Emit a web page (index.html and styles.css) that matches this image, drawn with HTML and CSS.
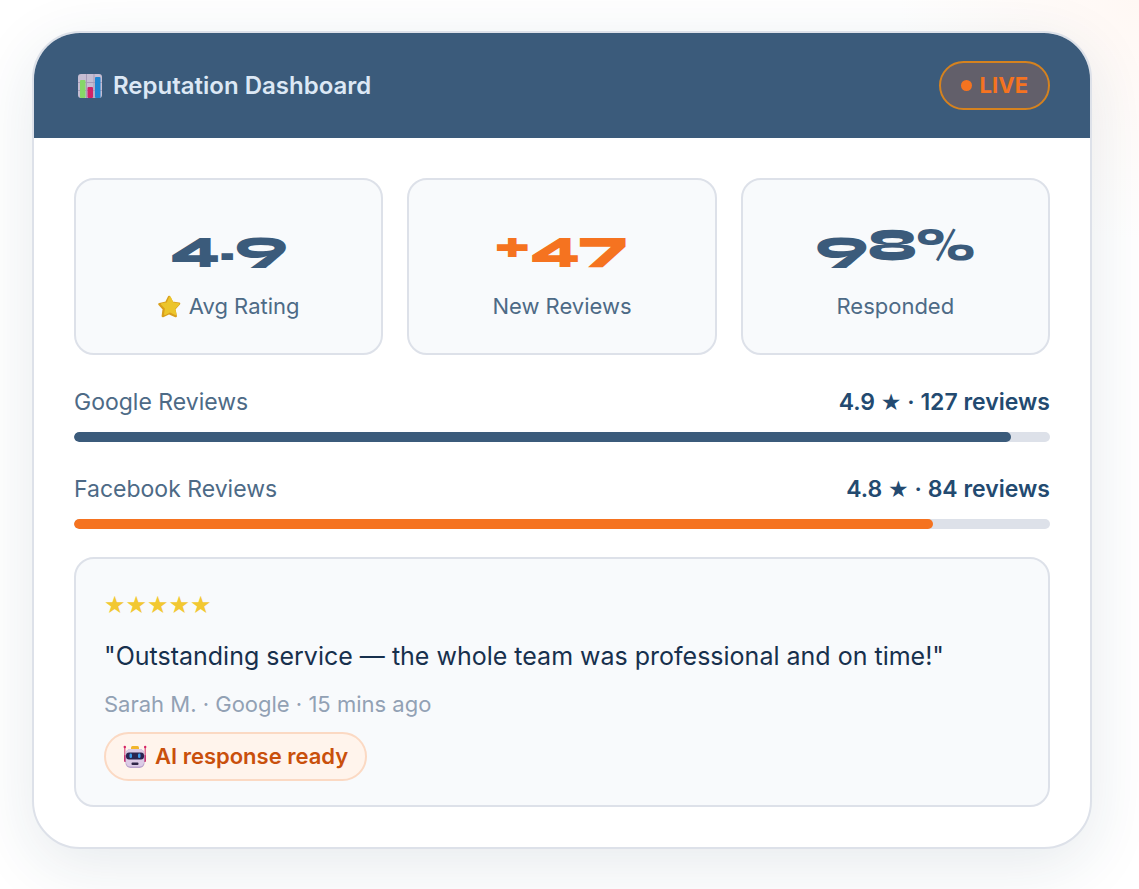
FILE: index.html
```html
<!DOCTYPE html>
<html lang="en">
<head>
  <meta charset="UTF-8">
  <meta name="viewport" content="width=device-width, initial-scale=1.0">
  <title>Reputation Dashboard</title>
  <link rel="stylesheet" href="styles.css">
</head>
<body>
  <main class="dashboard">
    <header class="dash-header">
      <h1 class="dash-title">
        <svg class="icon-chart" viewBox="0 0 24 24" aria-hidden="true">
          <rect width="24" height="24" rx="3" fill="#c6bdd2"/>
          <path d="M0 8.5h24M0 16.5h24M8.5 0v24M16 0v24" stroke="#a79bb8" stroke-width="1"/>
          <rect x="2" y="6" width="5.5" height="18" rx="1" fill="#86d767"/>
          <rect x="9.500" y="13" width="5.5" height="11" rx="1" fill="#cf2467"/>
          <rect x="17" y="3" width="5.5" height="21" rx="1" fill="#1f86d3"/>
        </svg>
        Reputation Dashboard
      </h1>
      <span class="live"><span class="live-dot"></span>LIVE</span>
    </header>
    <div class="dash-body">
      <section class="stats">
        <div class="stat">
          <div class="stat-value">4.9</div>
          <div class="stat-label">
            <svg class="icon-star" viewBox="0 0 24 24" aria-hidden="true">
              <path d="M11.500 2l3.300 6 7.200 1-5 5.500 1.500 7.500-7-3-6.500 3 1-7.500L1.500 9.500l7-1.500z" fill="#d99f1c" stroke="#d99f1c" stroke-width="2.500" stroke-linejoin="round"/>
              <path d="M12.500 2.500l2.800 6 6.200 1-4.500 4.500 1.200 6-5.700-2.800-5.200 2.800 1-6.200L4 9.500l6-1z" fill="#ecc52c" stroke="#ecc52c" stroke-width="2" stroke-linejoin="round"/>
            </svg>
            Avg Rating
          </div>
        </div>
        <div class="stat">
          <div class="stat-value orange">+47</div>
          <div class="stat-label">New Reviews</div>
        </div>
        <div class="stat">
          <div class="stat-value">98%</div>
          <div class="stat-label">Responded</div>
        </div>
      </section>

      <section class="source">
        <div class="source-row">
          <span>Google Reviews</span>
          <strong>4.9 <span class="star">★</span> · 127 reviews</strong>
        </div>
        <div class="bar"><div class="bar-fill" style="width:96%"></div></div>
      </section>
      <section class="source">
        <div class="source-row">
          <span>Facebook Reviews</span>
          <strong>4.8 <span class="star">★</span> · 84 reviews</strong>
        </div>
        <div class="bar"><div class="bar-fill orange" style="width:88%"></div></div>
      </section>

      <article class="review">
        <div class="review-stars star">★★★★★</div>
        <p class="review-text">"Outstanding service — the whole team was professional and on time!"</p>
        <p class="review-meta">Sarah M. · Google · 15 mins ago</p>
        <span class="ai-pill">
          <svg class="icon-robot" viewBox="0 0 24 24" aria-hidden="true">
            <path d="M1.800 2v14M22.200 2v14" stroke="#d8507f" stroke-width="1.200"/>
            <circle cx="1.800" cy="2" r="1.200" fill="#d52364"/>
            <circle cx="22.200" cy="2" r="1.200" fill="#d52364"/>
            <rect x="1" y="10" width="3" height="7" rx="1" fill="#c93572"/>
            <rect x="20" y="10" width="3" height="7" rx="1" fill="#c93572"/>
            <rect x="8" y="1" width="8" height="4" rx="1.500" fill="#f2b62c"/>
            <rect x="2.500" y="4" width="19" height="19" rx="5" fill="#b9a2cc"/>
            <rect x="3" y="4" width="18" height="17.500" rx="4.500" fill="#dccbe6"/>
            <rect x="3" y="7.500" width="18" height="7" rx="3" fill="#2a2450"/>
            <rect x="6.500" y="8.500" width="2.500" height="4.500" rx="1.200" fill="#3d9bea"/>
            <rect x="15" y="8.500" width="2.500" height="4.500" rx="1.200" fill="#3d9bea"/>
            <rect x="8.500" y="17.500" width="7" height="2.500" rx="1" fill="#2f2648"/>
          </svg>
          AI response ready
        </span>
      </article>
    </div>
  </main>
</body>
</html>
```
FILE: styles.css
```css
:root {
  --navy: #3b5b7b;
  --navy-dark: #234a70;
  --orange: #f57320;
  --line: #dde1e9;
  --soft: #f8fafc;
}
*, *::before, *::after { box-sizing: border-box; }
body {
  margin: 0;
  padding: 31px 47px 40px 32px;
  font-family: Inter, 'Liberation Sans', sans-serif;
  font-size: 23px;
  line-height: 37px;
  color: var(--navy);
  background: radial-gradient(circle at top right, #fff8f4, #fff 240px);
}
h1, p { margin: 0; }

.dashboard {
  border: 2px solid var(--line);
  border-radius: 48px;
  background: #fff;
  overflow: hidden;
  box-shadow: 0 16px 64px rgba(30,60,90,0.11);
}
.dash-header {
  display: flex;
  justify-content: space-between;
  align-items: center;
  padding: 28px 40px;
  background: var(--navy);
}
.dash-title {
  display: flex;
  align-items: center;
  gap: 11px;
  padding-left: 4px;
  font-size: 24px;
  font-weight: 600;
  color: #dce8f5;
}
.icon-chart { width: 24px; height: 24px; }
.live {
  display: flex;
  align-items: center;
  gap: 8px;
  padding: 4px 20px;
  border: 2px solid #d5821f;
  border-radius: 25px;
  background: #625f6a;
  color: var(--orange);
  font-size: 22px;
  font-weight: 700;
}
.live-dot { width: 11px; height: 11px; border-radius: 50%; background: var(--orange); }

.dash-body { padding: 40px; }
.stats { display: grid; grid-template-columns: repeat(3, 1fr); gap: 24px; }
.stat {
  padding: 28px;
  border: 2px solid var(--line);
  border-radius: 20px;
  background: var(--soft);
  text-align: center;
}
.stat-value {
  margin-bottom: 6px;
  font-family: Syne, 'DejaVu Sans', sans-serif;
  font-size: 45px;
  font-weight: 800;
  line-height: 74px;
}
.stat-value.orange { color: var(--orange); }
.stat-label {
  display: flex;
  justify-content: center;
  align-items: center;
  gap: 8px;
  font-size: 22px;
  color: #4d6a86;
}
.icon-star { width: 23px; height: 23px; }
.star { font-family: 'DejaVu Sans', sans-serif; font-weight: 400; }

.source { margin-top: 28px; }
.source-row {
  display: flex;
  justify-content: space-between;
  margin-bottom: 10px;
  line-height: 39px;
  color: #4d6a86;
}
.source-row strong { font-weight: 600; color: var(--navy-dark); }
.bar { height: 10px; border-radius: 5px; background: var(--line); overflow: hidden; }
.bar-fill { height: 100%; border-radius: 5px; background: var(--navy); }
.bar-fill.orange { background: var(--orange); }

.review {
  margin-top: 28px;
  padding: 28px 28px 24px;
  border: 2px solid var(--line);
  border-radius: 20px;
  background: var(--soft);
}
.review-stars { font-size: 24px; color: #f2c832; }
.review-text { margin: 12px 0 10px; font-size: 25px; line-height: 40px; color: #17304d; }
.review-meta { margin-bottom: 10px; font-size: 22px; line-height: 36px; color: #92a1b4; }
.ai-pill {
  display: flex;
  align-items: center;
  gap: 8px;
  width: fit-content;
  padding: 4px 17px;
  border: 2px solid #fbd9c3;
  border-radius: 25px;
  background: #fff4ec;
  color: #c9500c;
  font-size: 22px;
  font-weight: 600;
}
.icon-robot { width: 24px; height: 24px; }
```
